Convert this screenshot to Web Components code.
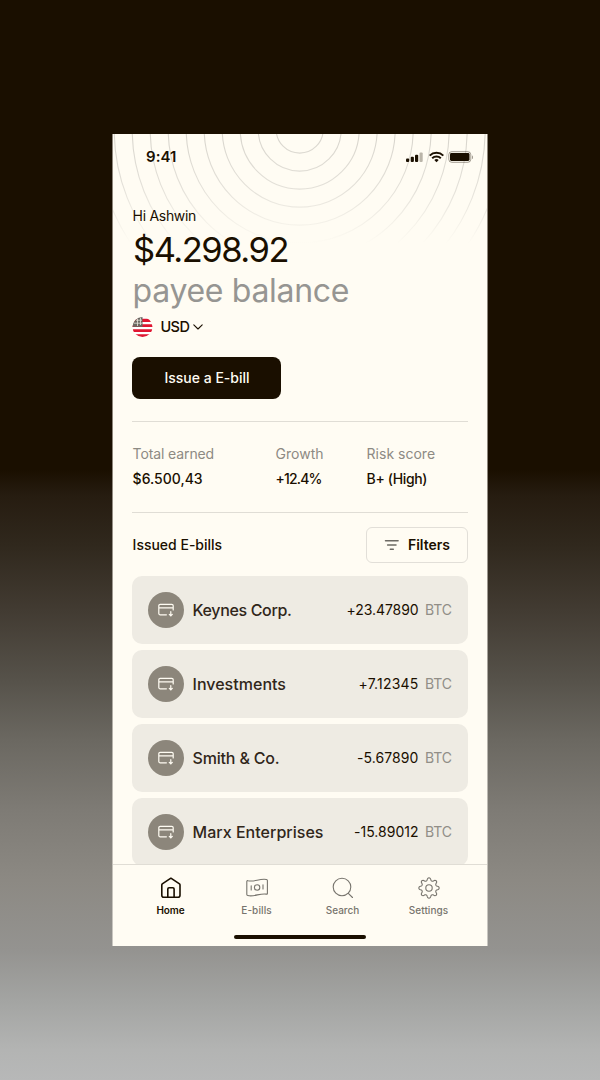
<!DOCTYPE html>
<html lang="en">
<head>
<meta charset="utf-8">
<title>E-bills wallet</title>
<style>
  html, body { margin: 0; height: 100%; }
  body {
    font-family: Inter, "Liberation Sans", sans-serif;
    color: #1a0f00;
    background: linear-gradient(180deg, #1a0f00 0, #1a0f00 470px, #261c10 495px, #30281d 545px, #423b32 610px, #56524a 680px, #6b6861 740px, #7e7b75 810px, #8c8983 880px, #949390 950px, #a3a4a2 1000px, #b3b4b3 1050px, #b7b8b8 1080px);
  }
</style>
</head>
<body>
<wallet-stage></wallet-stage>
<script>
const define = (name, html, after) => {
  const tpl = document.createElement('template');
  tpl.innerHTML = html;
  customElements.define(name, class extends HTMLElement {
    connectedCallback() {
      if (this.shadowRoot) return;
      this.attachShadow({ mode: 'open' }).append(tpl.content.cloneNode(true));
      if (after) after(this, this.shadowRoot);
    }
  });
};

// One line of text tracked out to the width given in "w".
define('tracked-text', `
  <style>:host{display:block;white-space:nowrap;flex:none} span{display:inline-block}</style>
  <span><slot></slot></span>`, (el, root) => {
  const w = +el.getAttribute('w');
  const span = root.querySelector('span');
  el.style.width = w + 'px';
  const n = el.textContent.length;
  span.style.letterSpacing = '0px';
  const natural = span.getBoundingClientRect().width;
  span.style.letterSpacing = ((w - natural) / n).toFixed(3) + 'px';
});

const ICONS = {
  home: '<g stroke-width="1.6"><path d="M1.800 7.900Q1.800 7.300 2.300 6.900L10.900 1.200l8.600 5.700q.5.400.5 1v10.300a2 2 0 0 1-2 2H3.800a2 2 0 0 1-2-2z"/><path d="M7.800 20v-8a1.200 1.200 0 0 1 1.200-1.200h3.900a1.200 1.200 0 0 1 1.200 1.200v8"/></g>',
  bill: '<path d="M.8 4.600C.8 3.700 1.500 3.500 2.100 3.700 8 5.400 13.500 1.300 20.400 2.500Q21.400 2.700 21.400 3.500V16.400Q21.400 17.300 20.400 17.100C14 15.900 8 20.200 1.800 18.500Q.8 18.300.8 17.500z"/><circle cx="11.100" cy="10.500" r="2.700"/><path d="M5.200 8.700v4.200M17 7.800V12"/>',
  search: '<circle cx="10" cy="10" r="8.800"/><path d="m16.300 16.300 4.200 4.200"/>',
  gear: '<circle cx="11" cy="11" r="3.200"/>',
  filter: '<g stroke-width="1.500"><path d="M4.500 6.800h12.600M6.600 11h8.400M9.300 15.200h3"/></g>',
  card: '<g stroke-width="1.200"><path d="M11.400 15.800H5.200a1.400 1.400 0 0 1-1.400-1.400V6.700a1.400 1.400 0 0 1 1.400-1.400h11.600a1.400 1.400 0 0 1 1.400 1.400V11M3.800 8.900h14.400"/><path d="M15.800 12.700v4.200m-1.500-1.500 1.500 1.500 1.500-1.500"/></g>'
};
{
  // Eight rounded teeth round the hub.
  let pts = [];
  for (let i = 0; i < 96; i++) {
    const t = i / 96 * Math.PI * 2;
    const c = Math.cos(8 * t);
    const r = 8.800 + 1.350 * Math.sign(c) * Math.pow(Math.abs(c), .55);
    pts.push((11 + r * Math.sin(t)).toFixed(2) + ' ' + (11 - r * Math.cos(t)).toFixed(2));
  }
  ICONS.gear += '<path d="M' + pts.join('L') + 'z"/>';
}
define('line-icon', `
  <style>:host{display:block;width:22px;height:22px;flex:none}
  svg{display:block;fill:none;stroke:currentColor;stroke-width:1.1;stroke-linecap:round;stroke-linejoin:round}</style>
  <svg width="22" height="22" viewBox="0 0 22 22"></svg>`,
  (el, root) => { root.querySelector('svg').innerHTML = ICONS[el.getAttribute('name')]; });

// Concentric rings that fade out below the status bar.
define('ring-field', `
  <style>:host{display:block} svg{display:block}</style>
  <svg width="374" height="110" viewBox="0 0 374 110">
    <defs><linearGradient id="f" x1="0" y1="0" x2="0" y2="110" gradientUnits="userSpaceOnUse">
      <stop offset="0" stop-color="#d8d5cd"/><stop offset=".5" stop-color="#e4e1d9"/><stop offset="1" stop-color="#fffcf3"/></linearGradient></defs>
    <g fill="none" stroke="url(#f)" stroke-width="1.100"></g>
  </svg>`, (el, root) => {
  let s = '';
  for (let i = 0; i < 12; i++) s += '<circle cx="186.700" cy="-4.4" r="' + (23.5 + 18 * i) + '"/>';
  root.querySelector('g').innerHTML = s;
});

define('status-bar', `
  <style>:host{display:flex;justify-content:space-between;align-items:center;height:46px;padding:0 14.500px 0 33px;box-sizing:border-box}
  tracked-text{font-size:15px;font-weight:600;margin-top:-2px} svg{display:block}</style>
  <tracked-text w="30.500">9:41</tracked-text>
  <svg width="68" height="14" viewBox="0 0 68 14">
    <g fill="#1a0f00">
      <rect x="1" y="8.400" width="3.200" height="3.600" rx="1"/><rect x="5.700" y="6.800" width="3.200" height="5.200" rx="1"/>
      <rect x="10" y="4.800" width="3.200" height="7.200" rx="1"/><rect x="14.500" y="2.500" width="3.200" height="9.500" rx="1" opacity=".3"/>
    </g>
    <g fill="none" stroke="#1a0f00" stroke-width="2"><path d="M24.700 5.600a9.700 9.700 0 0 1 13.600 0"/><path d="M27.200 8.300a6.100 6.100 0 0 1 8.600 0"/></g>
    <path d="M31.500 12.200 29.300 10a3.100 3.100 0 0 1 4.400 0z" fill="#1a0f00"/>
    <rect x="43.800" y="1.700" width="22" height="10.600" rx="3" fill="none" stroke="#1a0f00" stroke-opacity=".4"/>
    <rect x="45" y="3" width="19.500" height="8" rx="1.400" fill="#1a0f00"/>
    <path d="M67 5.400v3.600q1.200-.5 1.200-1.800T67 5.400" fill="#1a0f00" opacity=".4"/>
  </svg>`);

define('balance-head', `
  <style>
  :host{display:block}
  .hi{font-size:14px;line-height:20px;margin-top:26px;margin-left:.6px}
  .amount{font-size:34.500px;line-height:42px;margin-top:3px;margin-left:1px}
  .label{font-size:32px;line-height:40px;color:#969592;margin-left:.6px}
  .cur{display:flex;align-items:center;height:20px;margin-top:6px;font-size:14.500px;font-weight:500}
  .cur tracked-text{margin-left:7.400px;margin-top:-1px}
  .chev{margin-left:3.500px}
  svg{display:block}
  button{display:flex;align-items:center;justify-content:center;width:149px;height:42px;margin:20px 0 0;padding:0 0 2px 1px;box-sizing:border-box;border:0;border-radius:8px;background:#1a0f00;color:#fffcf3;font:500 14px Inter,"Liberation Sans",sans-serif}
  </style>
  <tracked-text class="hi" w="63.500">Hi Ashwin</tracked-text>
  <tracked-text class="amount" w="155">$4.298.92</tracked-text>
  <tracked-text class="label" w="216.500">payee balance</tracked-text>
  <div class="cur">
    <svg width="21" height="20" viewBox="0 0 21 20">
      <clipPath id="c"><circle cx="10.500" cy="10" r="10"/></clipPath>
      <g clip-path="url(#c)"><rect width="21" height="20" fill="#fff"/>
        <path d="M0 1.700h21v3.200H0zM0 7.200h21v2.800H0zM0 12.300h21v2.600H0zM0 17.300h21v3H0z" fill="#e01631"/>
        <rect width="10.500" height="9.800" fill="#6b6861"/>
        <path d="M2 6.200h8M5.500 2v7M8.500 1v7M4 3.200h6" stroke="#e9e6dd" stroke-width=".8"/></g>
    </svg>
    <tracked-text w="29">USD</tracked-text>
    <svg class="chev" width="10" height="6" viewBox="0 0 10 6"><path d="M.8.800 5 5 9.200.800" fill="none" stroke="#1a0f00" stroke-width="1.100" stroke-linecap="round" stroke-linejoin="round"/></svg>
  </div>
  <button><tracked-text w="85">Issue a E-bill</tracked-text></button>`);

define('stat-item', `
  <style>:host{display:block;font-size:14px;line-height:20px;padding-left:.6px}
  ::slotted([slot=label]){color:#8d8a83;margin-bottom:5px} ::slotted([slot=value]){font-weight:500}</style>
  <slot name="label"></slot><slot name="value"></slot>`);

define('stat-row', `
  <style>:host{display:grid;grid-template-columns:143px 91px 1fr;height:92px;box-sizing:border-box;padding-top:22px;margin-top:22px;border:solid #e0ddd5;border-width:1px 0}</style>
  <stat-item><tracked-text slot="label" w="81.500">Total earned</tracked-text><tracked-text slot="value" w="70">$6.500,43</tracked-text></stat-item>
  <stat-item><tracked-text slot="label" w="48">Growth</tracked-text><tracked-text slot="value" w="46">+12.4%</tracked-text></stat-item>
  <stat-item><tracked-text slot="label" w="68.500">Risk score</tracked-text><tracked-text slot="value" w="60.500">B+ (High)</tracked-text></stat-item>`);

define('list-head', `
  <style>:host{display:flex;justify-content:space-between;align-items:center;margin:14px 0 13px;font-size:14px;font-weight:500}
  :host > tracked-text, .title{margin:-2px 0 0 .6px}
  button{display:flex;align-items:center;width:102px;height:36px;padding:0 0 0 14px;border:1px solid #e2dfd8;border-radius:6px;background:none;color:#1a0f00;font:600 14px Inter,"Liberation Sans",sans-serif;box-sizing:border-box}
  button tracked-text{margin-top:-2px}
  line-icon{color:#6c6963;margin-right:5px}</style>
  <tracked-text class="title" w="89.500">Issued E-bills</tracked-text>
  <button><line-icon name="filter"></line-icon><tracked-text w="42">Filters</tracked-text></button>`);

define('bill-row', `
  <style>:host{display:flex;align-items:center;height:68px;flex:none;box-sizing:border-box;padding:0 16px;border-radius:10px;background:#eeebe3}
  .badge{display:grid;place-items:center;width:36px;height:36px;border-radius:50%;background:#8c867b;color:#fffcf3;margin-right:8.500px}
  ::slotted([slot=name]){font-size:16px;font-weight:500;color:#30261a}
  ::slotted([slot=amount]){font-size:14px;margin-left:auto;margin-top:-2px}
  .unit{font-size:14px;color:#918e87;margin-left:6.500px;margin-top:-2px}</style>
  <div class="badge"><line-icon name="card"></line-icon></div>
  <slot name="name"></slot><slot name="amount"></slot>
  <tracked-text class="unit" w="27">BTC</tracked-text>`);

define('nav-tab', `
  <style>:host{display:flex;flex-direction:column;align-items:center;width:86px;color:#77746d;font-size:10px;line-height:14px;font-weight:500}
  :host([active]){color:#1a0f00;font-weight:600} ::slotted(tracked-text){margin-top:4px}</style>
  <slot name="icon"></slot><slot></slot>`);

define('tab-bar', `
  <style>:host{display:block;height:82px;box-sizing:border-box;border-top:1px solid #e0ddd5;background:#fffcf3;flex:none}
  nav{display:flex;justify-content:center;padding-top:12px;padding-right:1px;height:58px;box-sizing:border-box}
  .grip{width:132px;height:4px;border-radius:2px;background:#1a0f00;margin:12px auto 0}</style>
  <nav>
    <nav-tab active><line-icon slot="icon" name="home"></line-icon><tracked-text w="28">Home</tracked-text></nav-tab>
    <nav-tab><line-icon slot="icon" name="bill"></line-icon><tracked-text w="30.500">E-bills</tracked-text></nav-tab>
    <nav-tab><line-icon slot="icon" name="search"></line-icon><tracked-text w="33.500">Search</tracked-text></nav-tab>
    <nav-tab><line-icon slot="icon" name="gear"></line-icon><tracked-text w="39.500">Settings</tracked-text></nav-tab>
  </nav>
  <div class="grip"></div>`);

define('phone-screen', `
  <style>:host{display:flex;flex-direction:column;position:relative;box-sizing:border-box;width:376px;height:812px;background:#fffcf3;background-clip:padding-box;border:solid rgba(255,252,243,.5);border-width:0 1px;overflow:hidden}
  ring-field{position:absolute;left:0;top:0}
  status-bar{position:relative;flex:none}
  main{position:relative;flex:1;min-height:0;overflow:hidden;padding:0 19px}
  .list{display:flex;flex-direction:column;gap:6px}</style>
  <ring-field></ring-field>
  <status-bar></status-bar>
  <main>
    <balance-head></balance-head>
    <stat-row></stat-row>
    <list-head></list-head>
    <div class="list">
      <bill-row><tracked-text slot="name" w="99">Keynes Corp.</tracked-text><tracked-text slot="amount" w="72">+23.47890</tracked-text></bill-row>
      <bill-row><tracked-text slot="name" w="93.500">Investments</tracked-text><tracked-text slot="amount" w="60">+7.12345</tracked-text></bill-row>
      <bill-row><tracked-text slot="name" w="87">Smith &amp; Co.</tracked-text><tracked-text slot="amount" w="61.500">-5.67890</tracked-text></bill-row>
      <bill-row><tracked-text slot="name" w="131">Marx Enterprises</tracked-text><tracked-text slot="amount" w="64.500">-15.89012</tracked-text></bill-row>
    </div>
  </main>
  <tab-bar></tab-bar>`);

define('wallet-stage', `
  <style>:host{display:flex;justify-content:center;box-sizing:border-box;height:1080px;padding-top:134px}</style>
  <phone-screen></phone-screen>`);
</script>
</body>
</html>
